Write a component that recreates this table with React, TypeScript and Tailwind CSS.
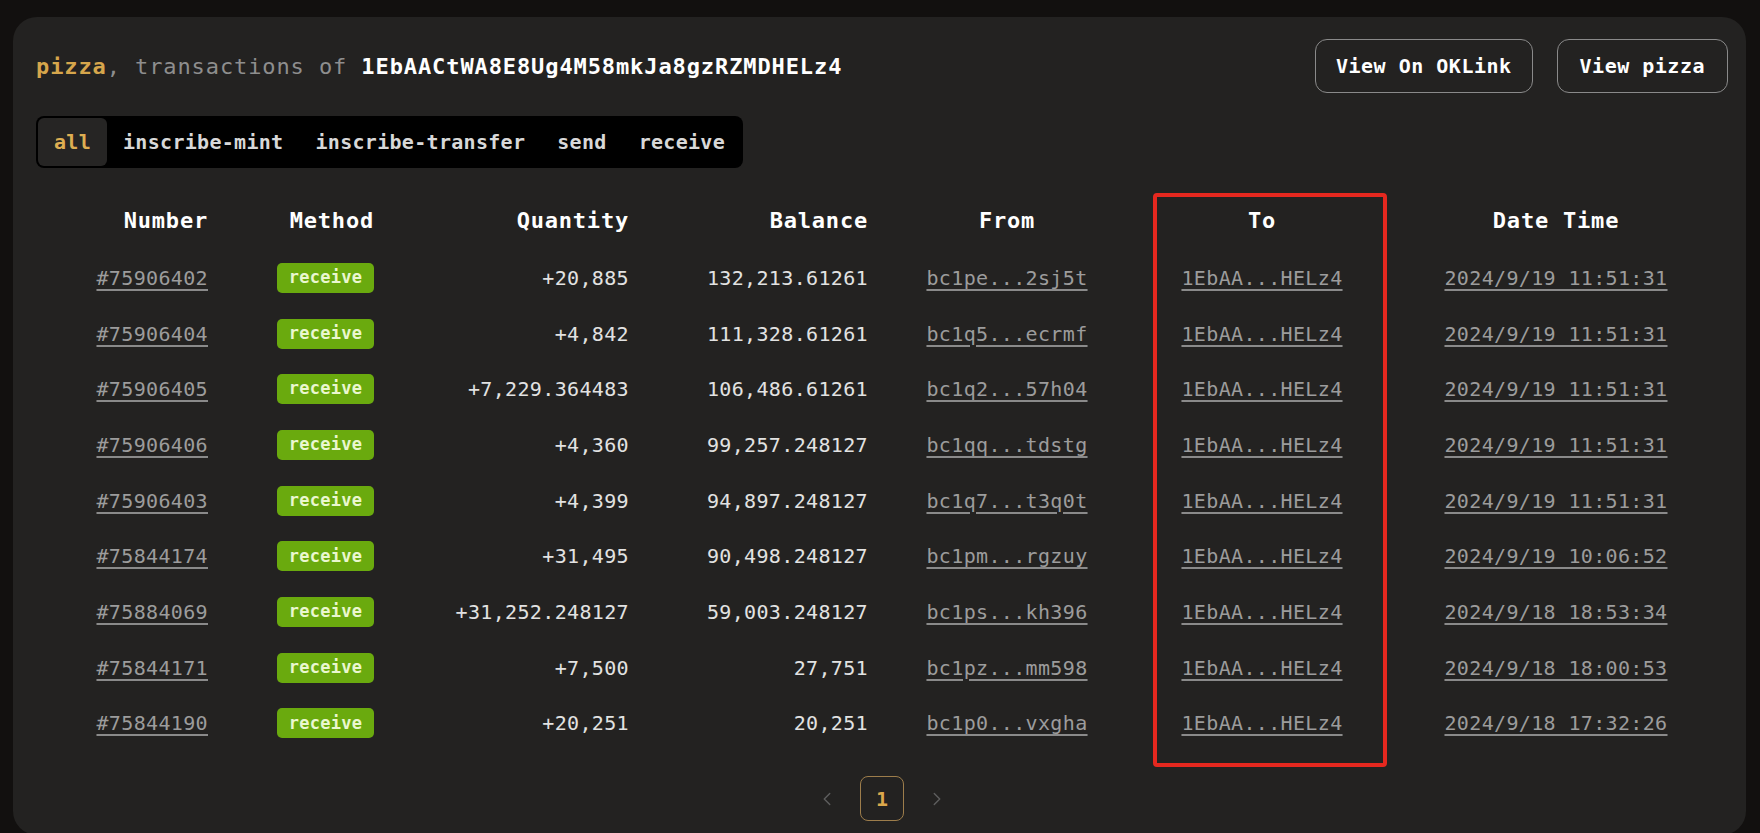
import { ChevronLeft, ChevronRight } from "lucide-react";

const rows = [
  { no: "#75906402", qty: "+20,885", bal: "132,213.61261", from: "bc1pe...2sj5t", time: "2024/9/19 11:51:31" },
  { no: "#75906404", qty: "+4,842", bal: "111,328.61261", from: "bc1q5...ecrmf", time: "2024/9/19 11:51:31" },
  { no: "#75906405", qty: "+7,229.364483", bal: "106,486.61261", from: "bc1q2...57h04", time: "2024/9/19 11:51:31" },
  { no: "#75906406", qty: "+4,360", bal: "99,257.248127", from: "bc1qq...tdstg", time: "2024/9/19 11:51:31" },
  { no: "#75906403", qty: "+4,399", bal: "94,897.248127", from: "bc1q7...t3q0t", time: "2024/9/19 11:51:31" },
  { no: "#75844174", qty: "+31,495", bal: "90,498.248127", from: "bc1pm...rgzuy", time: "2024/9/19 10:06:52" },
  { no: "#75884069", qty: "+31,252.248127", bal: "59,003.248127", from: "bc1ps...kh396", time: "2024/9/18 18:53:34" },
  { no: "#75844171", qty: "+7,500", bal: "27,751", from: "bc1pz...mm598", time: "2024/9/18 18:00:53" },
  { no: "#75844190", qty: "+20,251", bal: "20,251", from: "bc1p0...vxgha", time: "2024/9/18 17:32:26" },
];

const tabs = ["all", "inscribe-mint", "inscribe-transfer", "send", "receive"];

const cols = "grid grid-cols-[188px_166px_255px_239px_246px_264px_324px]";
const link = "underline underline-offset-[4px] decoration-[#8a8a8a] text-[#9c9c9c]";

export default function App() {
  return (
    <div className="relative min-h-[833px] bg-[#12100f] pt-[17px] pl-[13px] pr-[14px] font-['DejaVu_Sans_Mono',monospace] overflow-hidden">
      <div className="h-[818px] rounded-[24px] bg-[#232221] pl-[23px] pr-[18px] pt-[22px]">
        {/* Title + actions */}
        <div className="flex items-center justify-between">
          <div className="text-[22px] tracking-[0.9px] font-bold">
            <span className="text-[#d6a64c]">pizza</span>
            <span className="text-[#8e8e8e] font-normal">, transactions of </span>
            <span className="text-white">1EbAACtWA8E8Ug4M58mkJa8gzRZMDHELz4</span>
          </div>
          <div className="flex gap-[24px]">
            <button className="h-[54px] px-[20px] rounded-[12px] border-[1.5px] border-[#8a8a8a] text-white text-[20px] tracking-[0.5px] font-bold">
              View On OKLink
            </button>
            <button className="h-[54px] px-[22px] rounded-[12px] border-[1.5px] border-[#8a8a8a] text-white text-[20px] tracking-[0.5px] font-bold">
              View pizza
            </button>
          </div>
        </div>

        {/* Filter tabs */}
        <div className="mt-[23px] inline-flex h-[52px] items-stretch rounded-[8px] bg-black p-[2px]">
          {tabs.map((t, i) => (
            <div
              key={t}
              className={`flex items-center px-4 rounded-[6px] text-[20px] tracking-[0.3px] font-bold ${
                i === 0 ? "bg-[#262524] text-[#deae52]" : "text-[#d8d8d8]"
              }`}
            >
              {t}
            </div>
          ))}
        </div>

        {/* Table */}
        <div className="mt-[22px]">
          <div className={`${cols} h-[60px] items-center text-white text-[22px] tracking-[0.8px] font-bold`}>
            <div className="text-right pr-4">Number</div>
            <div className="text-right pr-4">Method</div>
            <div className="text-right pr-4">Quantity</div>
            <div className="text-right pr-4">Balance</div>
            <div className="text-center">From</div>
            <div className="text-center">To</div>
            <div className="text-center">Date Time</div>
          </div>
          {rows.map((r) => (
            <div key={r.no} className={`${cols} h-[55.7px] items-center text-[20px] tracking-[0.35px] text-[#e2e2e2]`}>
              <div className="text-right pr-4">
                <span className={link}>{r.no}</span>
              </div>
              <div className="flex justify-end pr-4">
                <span className="flex h-[30px] w-[97px] items-center justify-center rounded-[5px] bg-[#6aaa0e] text-[17px] tracking-[0.3px] font-bold text-[#eaf7cf]">
                  receive
                </span>
              </div>
              <div className="text-right pr-4">{r.qty}</div>
              <div className="text-right pr-4">{r.bal}</div>
              <div className="text-center">
                <span className={link}>{r.from}</span>
              </div>
              <div className="text-center">
                <span className={link}>1EbAA...HELz4</span>
              </div>
              <div className="text-center">
                <span className={link}>{r.time}</span>
              </div>
            </div>
          ))}
        </div>

        {/* Pagination */}
        <div className="mt-[25px] flex items-center justify-center gap-[22px]">
          <ChevronLeft size={22} strokeWidth={1.5} className="text-[#5e5e5e]" />
          <div className="flex h-[45px] w-[44px] items-center justify-center rounded-[8px] border-[1.5px] border-[#9d7d4b] text-[20px] font-bold text-[#dca84c]">
            1
          </div>
          <ChevronRight size={22} strokeWidth={1.5} className="text-[#5e5e5e]" />
        </div>
      </div>

      {/* Red highlight annotation */}
      <div className="absolute left-[1153px] top-[193px] h-[574px] w-[234px] rounded-[4px] border-[4px] border-[#e5281f]" />
    </div>
  );
}
